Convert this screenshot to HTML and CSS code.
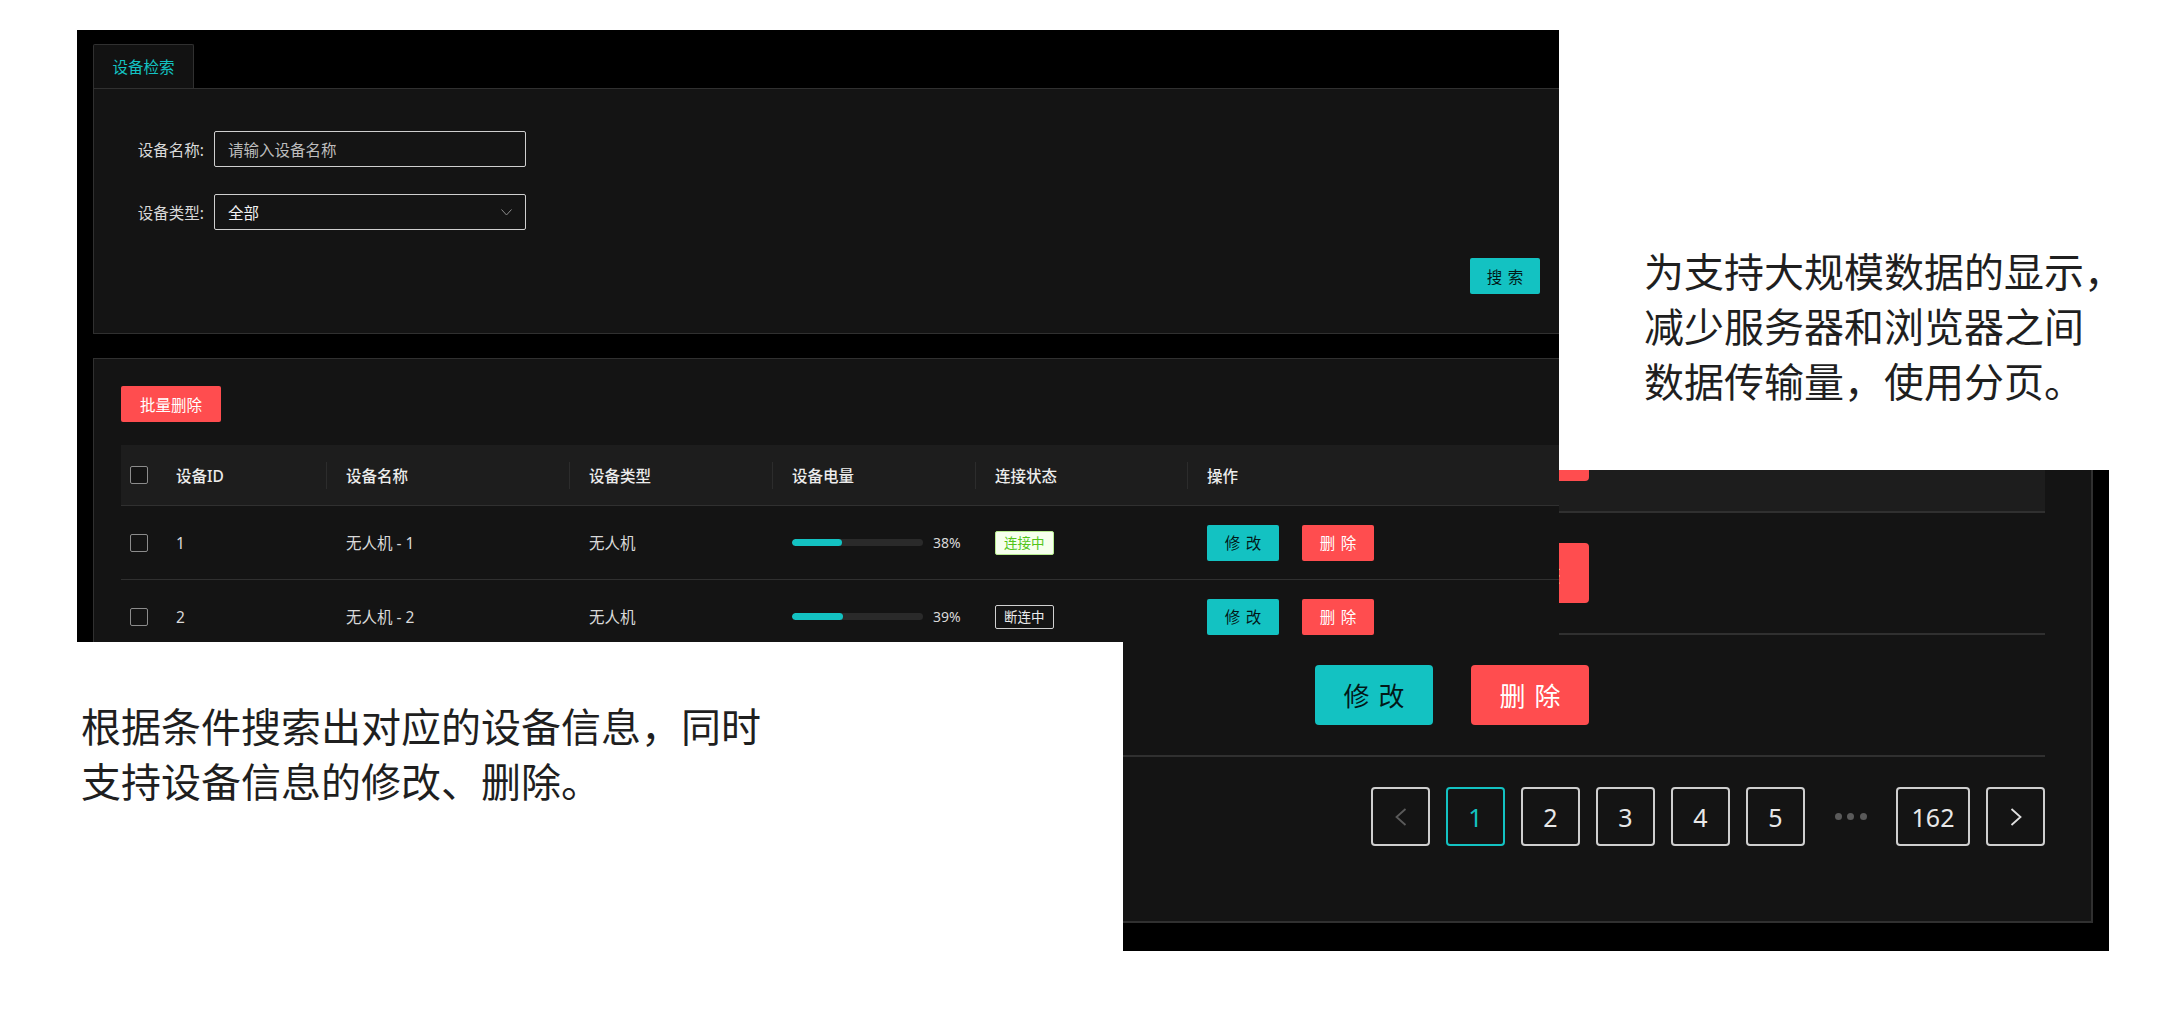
FILE: index.html
```html
<!DOCTYPE html>
<html lang="zh-CN">
<head>
<meta charset="utf-8">
<title>设备管理</title>
<link rel="stylesheet" href="styles.css">
</head>
<body>
<div class="slide">

  <div class="shot shot-b">
    <div class="b-panel">
      <div class="b-row is-hover">
        <span class="btn btn-primary btn-lg"></span>
        <span class="btn btn-danger btn-lg"></span>
      </div>
      <div class="b-row">
        <span class="btn btn-primary btn-lg"><span class="sp">修改</span></span>
        <span class="btn btn-danger btn-lg"><span class="sp">删除</span></span>
      </div>
      <div class="b-row">
        <span class="btn btn-primary btn-lg"><span class="sp">修改</span></span>
        <span class="btn btn-danger btn-lg"><span class="sp">删除</span></span>
      </div>
      <div class="b-pager">
        <span class="pg pg-disabled"><svg width="12" height="18" viewBox="0 0 12 18"><polyline points="10.5,1 1.5,9 10.5,17" fill="none" stroke="#5a5a5a" stroke-width="1.8"/></svg></span>
        <span class="pg pg-active">1</span>
        <span class="pg">2</span>
        <span class="pg">3</span>
        <span class="pg">4</span>
        <span class="pg">5</span>
        <span class="pg pg-ellipsis"><i></i><i></i><i></i></span>
        <span class="pg pg-wide">162</span>
        <span class="pg"><svg width="12" height="18" viewBox="0 0 12 18"><polyline points="1.5,1 10.5,9 1.5,17" fill="none" stroke="#e0e0e0" stroke-width="1.8"/></svg></span>
      </div>
    </div>
  </div>

  <div class="shot shot-a">
    <div class="tabs"><div class="tab">设备检索</div></div>
    <div class="panel panel-search">
      <div class="form-row">
        <label class="form-label">设备名称:</label>
        <div class="field"><span class="placeholder">请输入设备名称</span></div>
      </div>
      <div class="form-row">
        <label class="form-label">设备类型:</label>
        <div class="field"><span class="value">全部</span>
          <svg class="chev" width="11" height="7" viewBox="0 0 11 7"><polyline points="0.5,0.5 5.5,6 10.5,0.5" fill="none" stroke="#8c8c8c" stroke-width="1"/></svg>
        </div>
      </div>
      <div class="form-actions"><span class="btn btn-primary btn-2 btn-search"><span class="sp">搜索</span></span></div>
    </div>

    <div class="panel panel-table">
      <span class="btn btn-danger btn-batch">批量删除</span>
      <div class="table">
        <div class="tr thead">
          <div class="cell cell-check"><span class="checkbox"></span></div>
          <div class="cell div">设备ID</div>
          <div class="cell div">设备名称</div>
          <div class="cell div">设备类型</div>
          <div class="cell div">设备电量</div>
          <div class="cell div">连接状态</div>
          <div class="cell">操作</div>
        </div>
        <div class="tr trow">
          <div class="cell cell-check"><span class="checkbox"></span></div>
          <div class="cell">1</div>
          <div class="cell">无人机 - 1</div>
          <div class="cell">无人机</div>
          <div class="cell"><div class="progress"><div class="progress-track"><div class="progress-fill" style="width:38%"></div></div><span class="progress-text">38%</span></div></div>
          <div class="cell"><span class="tag tag-success">连接中</span></div>
          <div class="cell ops"><span class="btn btn-primary btn-2"><span class="sp">修改</span></span><span class="btn btn-danger btn-2"><span class="sp">删除</span></span></div>
        </div>
        <div class="tr trow">
          <div class="cell cell-check"><span class="checkbox"></span></div>
          <div class="cell">2</div>
          <div class="cell">无人机 - 2</div>
          <div class="cell">无人机</div>
          <div class="cell"><div class="progress"><div class="progress-track"><div class="progress-fill" style="width:39%"></div></div><span class="progress-text">39%</span></div></div>
          <div class="cell"><span class="tag tag-default">断连中</span></div>
          <div class="cell ops"><span class="btn btn-primary btn-2"><span class="sp">修改</span></span><span class="btn btn-danger btn-2"><span class="sp">删除</span></span></div>
        </div>
      </div>
    </div>
  </div>

  <p class="caption caption-right">为支持大规模数据的显示，<br>减少服务器和浏览器之间<br>数据传输量，使用分页。</p>
  <p class="caption caption-left">根据条件搜索出对应的设备信息，同时<br>支持设备信息的修改、删除。</p>
</div>
</body>
</html>
```

FILE: styles.css
```css
* { box-sizing: border-box; }

html, body {
  margin: 0;
  padding: 0;
  background: #fff;
}

body {
  font-family: "Noto Sans", "Noto Sans CJK SC", sans-serif;
}

.slide {
  position: relative;
  width: 2174px;
  height: 1012px;
  overflow: hidden;
  background: #fff;
}

/* screenshot windows placed on the slide */
.shot {
  position: absolute;
  background: #000;
  overflow: hidden;
}

.shot-a {
  left: 77px;
  top: 30px;
  width: 1482px;
  height: 612px;
  font-size: 15.5px;
  color: #d9d9d9;
}

.shot-b {
  left: 1123px;
  top: 470px;
  width: 986px;
  height: 481px;
  display: flex;
  flex-direction: column;
  justify-content: flex-end;
  align-items: flex-end;
  padding: 0 16px 28px 0;
}

/* ---------- screenshot A ---------- */
.tabs {
  display: flex;
  padding: 14px 0 0 16px;
}

.tab {
  width: 101px;
  height: 44px;
  border: 1px solid #303030;
  border-bottom: 0;
  border-radius: 2px 2px 0 0;
  background: #121212;
  color: #13c2c2;
  display: flex;
  align-items: center;
  justify-content: center;
}

.panel {
  margin-left: 16px;
  width: 1476px;
  background: #141414;
  border: 1px solid #303030;
}

.panel-search {
  padding: 42px 28px 39px 41px;
}

.form-row {
  display: flex;
  align-items: center;
}

.form-row + .form-row {
  margin-top: 27px;
}

.form-label {
  width: 69px;
  margin-right: 10px;
  text-align: right;
  white-space: nowrap;
  color: #d9d9d9;
}

.field {
  width: 312px;
  height: 36px;
  border: 1px solid #cfcfcf;
  border-radius: 2px;
  padding: 0 13px;
  display: flex;
  align-items: center;
  justify-content: space-between;
}

.placeholder { color: #bdbdbd; }
.value { color: #f2f2f2; }

.form-actions {
  display: flex;
  justify-content: flex-end;
  margin-top: 28px;
}

.btn {
  display: inline-flex;
  align-items: center;
  justify-content: center;
  height: 36px;
  padding: 0 19px;
  border-radius: 2px;
  font-size: 15.5px;
  white-space: nowrap;
}

.btn-primary {
  background: #13c2c2;
  color: rgba(0, 0, 0, 0.88);
}

.btn-danger {
  background: #ff4d4f;
  color: #fff;
}

.btn .sp {
  letter-spacing: 0.34em;
  margin-right: -0.34em;
}

.btn-2 {
  width: 72px;
  padding: 0;
}

.btn-search { width: 70px; }

.panel-table {
  width: 1560px;
  margin-top: 24px;
  padding: 27px 0 0 27px;
  height: 400px;
}

.table {
  margin-top: 23px;
}

.tr {
  display: grid;
  grid-template-columns: 36px 170px 243px 203px 203px 212px 1fr;
  align-items: center;
  border-bottom: 1px solid #303030;
}

.thead {
  height: 61px;
  background: #1d1d1d;
  color: #ececec;
  font-weight: 500;
}

.trow {
  height: 74px;
}

.cell {
  position: relative;
  height: 100%;
  padding-left: 19px;
  display: flex;
  align-items: center;
  white-space: nowrap;
}

.cell-check {
  padding-left: 9px;
}

.thead .div::after {
  content: "";
  position: absolute;
  right: 0;
  top: 17px;
  width: 1px;
  height: 27px;
  background: #2c2c2c;
}

.checkbox {
  width: 18px;
  height: 18px;
  border: 1px solid #8c8c8c;
  border-radius: 2px;
  background: #141414;
}

.progress {
  display: flex;
  align-items: center;
  gap: 10px;
}

.progress-track {
  width: 131px;
  height: 7px;
  border-radius: 4px;
  background: #2a2a2a;
  overflow: hidden;
}

.progress-fill {
  height: 100%;
  border-radius: 4px;
  background: #13c2c2;
}

.progress-text {
  font-size: 14px;
  color: #d9d9d9;
}

.tag {
  height: 24px;
  line-height: 22px;
  padding: 0 8px;
  font-size: 13.5px;
  border: 1px solid;
  border-radius: 2px;
}

.tag-success {
  color: #52c41a;
  background: #f6ffed;
  border-color: #b7eb8f;
}

.tag-default {
  color: #ececec;
  background: #141414;
  border-color: #d0d0d0;
}

.ops {
  gap: 23px;
}

/* ---------- screenshot B (enlarged crop) ---------- */
.b-panel {
  flex-shrink: 0;
  width: 990px;
  background: #141414;
  border-right: 2px solid #303030;
  border-bottom: 2px solid #303030;
  padding: 0 46px 75px 0;
}

.b-row {
  height: 122px;
  border-bottom: 2px solid #303030;
  display: flex;
  align-items: center;
  gap: 38px;
  padding-left: 212px;
}

.b-row.is-hover {
  background: #1d1d1d;
}

.btn-lg {
  width: 118px;
  height: 60px;
  padding: 0;
  font-size: 26px;
  border-radius: 4px;
}

.b-pager {
  margin-top: 30px;
  display: flex;
  justify-content: flex-end;
  gap: 16px;
}

.pg {
  width: 59px;
  height: 59px;
  border: 2px solid #cfcfcf;
  border-radius: 4px;
  display: flex;
  align-items: center;
  justify-content: center;
  font-size: 25px;
  color: #e8e8e8;
}

.pg-active {
  border-color: #13c2c2;
  color: #13c2c2;
}

.pg-wide {
  width: 74px;
}

.pg-ellipsis {
  border: 0;
  gap: 5.5px;
}

.pg-ellipsis i {
  width: 7px;
  height: 7px;
  border-radius: 50%;
  background: #5a5a5a;
}

/* ---------- captions ---------- */
.caption {
  position: absolute;
  margin: 0;
  font-family: "Noto Sans CJK SC", sans-serif;
  font-size: 40px;
  line-height: 55px;
  color: #1f1f1f;
  white-space: nowrap;
}

.caption-left {
  left: 81px;
  top: 698px;
}

.caption-right {
  left: 1644px;
  top: 243px;
}
```
